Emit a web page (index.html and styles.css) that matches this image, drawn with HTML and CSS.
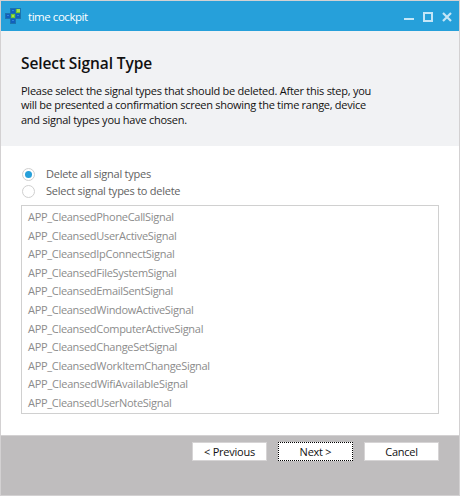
FILE: index.html
```html
<!DOCTYPE html>
<html lang="en">
<head>
<meta charset="utf-8">
<title>time cockpit</title>
<link rel="stylesheet" href="styles.css">
</head>
<body>
<div class="window">
  <header class="titlebar">
    <svg class="logo" width="16" height="16" viewBox="0 0 16 16">
      <g fill="#1c74ae">
        <rect x="5" y="0" width="6" height="6"/><rect x="10" y="0" width="6" height="6"/>
        <rect x="0" y="5" width="6" height="6"/><rect x="5" y="5" width="6" height="6"/><rect x="10" y="5" width="6" height="6"/>
        <rect x="5" y="10" width="6" height="6"/>
      </g>
      <g fill="#1160be">
        <rect x="6" y="1" width="4" height="4"/><rect x="1" y="6" width="4" height="4"/>
        <rect x="11" y="6" width="4" height="4"/><rect x="6" y="11" width="4" height="4"/>
      </g>
      <g fill="#2f86dc">
        <rect x="7" y="2" width="2" height="1"/><rect x="2" y="7" width="2" height="1"/>
        <rect x="12" y="7" width="2" height="1"/><rect x="7" y="12" width="2" height="1"/>
      </g>
      <g fill="#70c832"><rect x="11" y="1" width="4" height="4"/><rect x="6" y="6" width="4" height="4"/></g>
      <g fill="#a5e24e"><rect x="12" y="1" width="3" height="3"/><rect x="7" y="7" width="2" height="2"/></g>
    </svg>
    <span class="app-name">time cockpit</span>
    <svg class="controls" width="50" height="12" viewBox="0 0 50 12" fill="none" stroke="#c4e6f7" stroke-width="2">
      <path d="M0 8H10M20 2H28V10H20Z"/>
      <path d="M39 2L47 10M47 2L39 10" stroke-width="2.2"/>
    </svg>
  </header>
  <section class="intro">
    <h1>Select Signal Type</h1>
    <p>Please select the signal types that should be deleted. After this step, you<br>
    <span class="tight">will be presented a confirmation screen showing the time range, device</span><br>
    and signal types you have chosen.</p>
  </section>
  <main class="content">
    <div class="option"><span class="radio checked"></span><span>Delete all signal types</span></div>
    <div class="option"><span class="radio"></span><span>Select signal types to delete</span></div>
    <ul class="signals">
      <li>APP_CleansedPhoneCallSignal</li>
      <li>APP_CleansedUserActiveSignal</li>
      <li>APP_CleansedIpConnectSignal</li>
      <li>APP_CleansedFileSystemSignal</li>
      <li>APP_CleansedEmailSentSignal</li>
      <li>APP_CleansedWindowActiveSignal</li>
      <li>APP_CleansedComputerActiveSignal</li>
      <li>APP_CleansedChangeSetSignal</li>
      <li>APP_CleansedWorkItemChangeSignal</li>
      <li class="loose">APP_CleansedWifiAvailableSignal</li>
      <li>APP_CleansedUserNoteSignal</li>
    </ul>
  </main>
  <footer class="actions">
    <button>&lt; Previous</button>
    <button class="focused">Next &gt;</button>
    <button>Cancel</button>
  </footer>
</div>
</body>
</html>
```

FILE: styles.css
```css
* { box-sizing: border-box; }
body { margin: 0; font: 11px/14.4px "Open Sans", "Noto Sans", sans-serif; letter-spacing: -0.25px; color: #111; }
.window { width: 460px; height: 496px; border: 1px solid #d3d1d2; background: #fff; display: flex; flex-direction: column; }
.titlebar { height: 30px; flex: none; background: #26a0da; display: flex; align-items: center; padding: 0 5px 0 4px; color: #fff; }
.app-name { margin-left: 7px; font-size: 11.5px; padding-top: 2px; letter-spacing: -0.45px; }
.controls { margin: 2px 0 0 auto; }
.intro { height: 115px; flex: none; background: #f1f2f4; padding: 21px 20px 0; }
h1 { margin: 0; font-size: 15.5px; line-height: 22px; font-weight: 600; letter-spacing: -0.1px; color: #111; }
p { margin: 10px 0 0; white-space: nowrap; }
.tight { letter-spacing: -0.28px; }
.content { flex: 1; padding: 20px 20px 0; }
.option { height: 17px; display: flex; align-items: center; gap: 11px; padding-left: 1px; color: #626262; }
.radio { width: 13px; height: 13px; border: 1px solid #cfcfcf; border-radius: 50%; display: flex; align-items: center; justify-content: center; }
.checked::after { content: ""; width: 7px; height: 7px; border-radius: 50%; background: #26a0da; }
.signals { list-style: none; margin: 5px 0 0; padding: 2px 6px 0; height: 209px; border: 1px solid #d0d0d0; color: #8c8c8c; }
.signals li { height: 18.6px; line-height: 18.6px; letter-spacing: -0.3px; }
.signals .loose { letter-spacing: -0.25px; }
.actions { height: 60px; flex: none; border-top: 1px solid #d3d1d2; background: #bfbdbe; display: flex; justify-content: flex-end; gap: 11px; padding: 6px 20px 0 0; }
button { width: 75px; height: 19px; margin: 0; padding: 2px 0 0; border: 1px solid #d6d4d5; background: #fff; color: #111; font: inherit; letter-spacing: -0.25px; }
.focused { border: 1px dotted #000; }
```
